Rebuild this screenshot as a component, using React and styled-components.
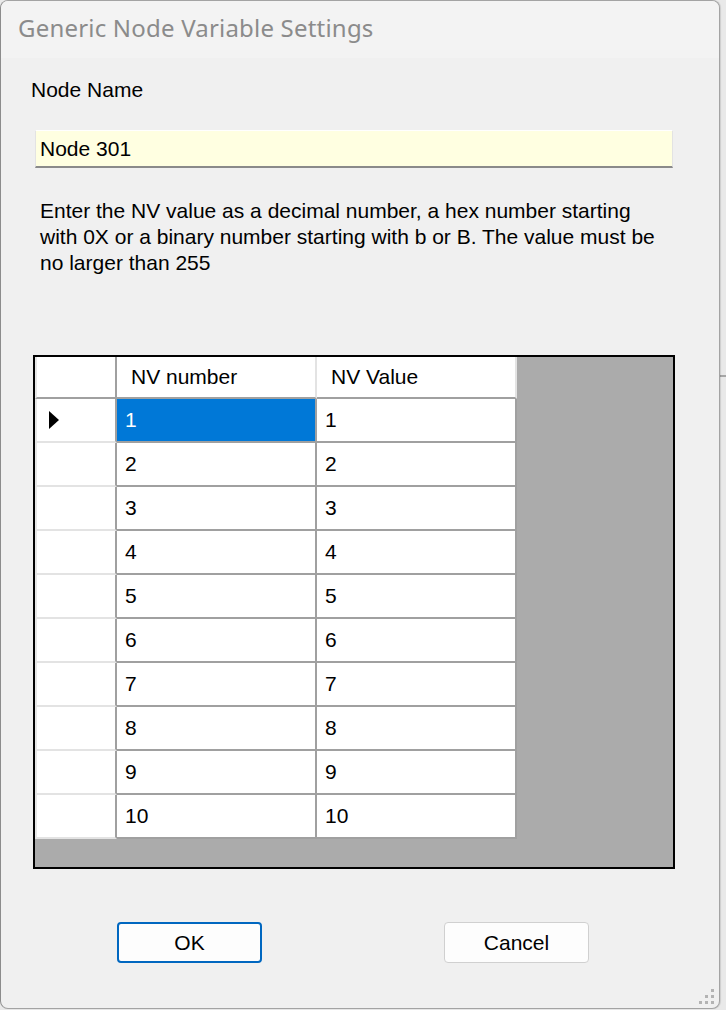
import React from "react";
import styled, { createGlobalStyle } from "styled-components";

const GlobalStyle = createGlobalStyle`
  html, body {
    margin: 0;
    padding: 0;
  }

  body {
    width: 726px;
    height: 1010px;
    overflow: hidden;
    background:
      linear-gradient(to bottom, transparent 375px, #a6a6a6 375px, #a6a6a6 377px, transparent 377px),
      #e9e9e9;
    font-family: "Liberation Sans", Arial, sans-serif;
  }
`;

const Window = styled.div`
  position: relative;
  box-sizing: border-box;
  width: 720px;
  height: 1009px;
  background: #f0f0f0;
  border: 1px solid #a3a3a3;
  border-left-color: #8c8c8c;
  border-radius: 8px;
  overflow: hidden;
  box-shadow: 1px 0 1px rgba(0, 0, 0, 0.12);
  display: flex;
  flex-direction: column;
`;

const TitleBar = styled.div`
  box-sizing: border-box;
  height: 57px;
  flex-shrink: 0;
  background: #f3f3f3;
  padding: 11px 0 0 17px;
  font-family: "Noto Sans", "Open Sans", sans-serif;
  font-size: 24px;
  line-height: 32px;
  letter-spacing: 0.2px;
  color: #8b8b8b;
`;

const Label = styled.div`
  margin: 20px 0 0 30px;
  font-size: 21px;
  line-height: 24px;
  color: #000;
`;

const TextBox = styled.div`
  box-sizing: border-box;
  margin: 28px 0 0 34px;
  width: 638px;
  height: 38px;
  padding-left: 4px;
  display: flex;
  align-items: center;
  background: #ffffe1;
  border: 1px solid #e3e3e3;
  border-top-color: #ffffff;
  border-bottom: 2px solid #8a8a8a;
  font-size: 21px;
  color: #000;
`;

const Hint = styled.p`
  margin: 30px 0 0 39px;
  font-size: 21px;
  line-height: 26px;
  white-space: nowrap;
  color: #000;
`;

const GridFrame = styled.div`
  box-sizing: border-box;
  margin: 79px 0 0 32px;
  width: 642px;
  height: 514px;
  border: 2px solid #000;
  background: #ababab;
`;

const Table = styled.div`
  display: grid;
  grid-template-columns: 82px 200px 200px;
  width: max-content;
  font-size: 21px;
  color: #000;
`;

const HeaderCell = styled.div`
  box-sizing: border-box;
  height: 42px;
  display: flex;
  align-items: center;
  padding-left: ${(p) => (p.$corner ? "0" : "14px")};
  background: #fff;
  border-left: ${(p) => (p.$corner ? "2px solid #e6e6e6" : "none")};
  border-right: 2px solid ${(p) => (p.$corner ? "#a0a0a0" : "#e3e3e3")};
  border-bottom: 2px solid #a0a0a0;
`;

const RowHeader = styled.div`
  box-sizing: border-box;
  height: 44px;
  display: flex;
  align-items: center;
  padding-left: 12px;
  background: #fff;
  border-left: 2px solid #e6e6e6;
  border-right: 2px solid #a0a0a0;
  border-bottom: 2px solid #e3e3e3;
`;

const Cell = styled.div`
  box-sizing: border-box;
  height: 44px;
  display: flex;
  align-items: center;
  padding-left: 8px;
  background: ${(p) => (p.$selected ? "#0078d7" : "#fff")};
  color: ${(p) => (p.$selected ? "#fff" : "#000")};
  border-right: 2px solid #a0a0a0;
  border-bottom: 2px solid #a0a0a0;
`;

const ButtonRow = styled.div`
  display: flex;
  gap: 182px;
  margin: 53px 0 0 116px;
`;

const Button = styled.button`
  box-sizing: border-box;
  width: 145px;
  height: 41px;
  padding: 0;
  border-radius: 4px;
  background: #fdfdfd;
  border: ${(p) => (p.$primary ? "2px solid #0067c0" : "1px solid #d0d0d0")};
  font-family: "Liberation Sans", Arial, sans-serif;
  font-size: 21px;
  color: #000;
`;

const Grip = styled.svg`
  position: absolute;
  right: 3px;
  bottom: 3px;
`;

const rows = Array.from({ length: 10 }, (_, i) => i + 1);

const RowArrow = () => (
  <svg width="10" height="18" viewBox="0 0 10 18">
    <polygon points="0,0 10,9 0,18" fill="#000" />
  </svg>
);

export default function App() {
  return (
    <>
      <GlobalStyle />
      <Window>
        <TitleBar>Generic Node Variable Settings</TitleBar>
        <Label>Node Name</Label>
        <TextBox>Node 301</TextBox>
        <Hint>
          Enter the NV value as a decimal number, a hex number starting
          <br />
          with 0X or a binary number starting with b or B. The value must be
          <br />
          no larger than 255
        </Hint>
        <GridFrame>
          <Table>
            <HeaderCell $corner />
            <HeaderCell>NV number</HeaderCell>
            <HeaderCell>NV Value</HeaderCell>
            {rows.map((n) => (
              <React.Fragment key={n}>
                <RowHeader>{n === 1 && <RowArrow />}</RowHeader>
                <Cell $selected={n === 1}>{n}</Cell>
                <Cell>{n}</Cell>
              </React.Fragment>
            ))}
          </Table>
        </GridFrame>
        <ButtonRow>
          <Button $primary>OK</Button>
          <Button>Cancel</Button>
        </ButtonRow>
        <Grip width="17" height="16" viewBox="0 0 17 16">
          <rect x="12" y="0" width="3" height="3" fill="#b3b3b3" />
          <rect x="6" y="6" width="3" height="3" fill="#b3b3b3" />
          <rect x="12" y="6" width="3" height="3" fill="#b3b3b3" />
          <rect x="0" y="12" width="3" height="3" fill="#b3b3b3" />
          <rect x="6" y="12" width="3" height="3" fill="#b3b3b3" />
          <rect x="12" y="12" width="3" height="3" fill="#b3b3b3" />
        </Grip>
      </Window>
    </>
  );
}
